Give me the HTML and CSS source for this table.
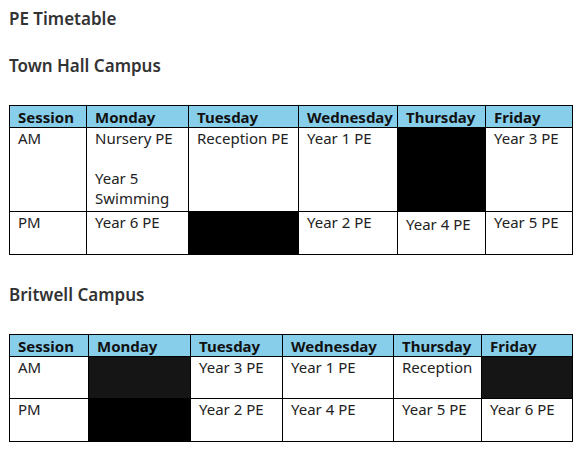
FILE: index.html
```html
<!DOCTYPE html>
<html lang="en">
<head>
<meta charset="utf-8">
<title>PE Timetable</title>
<link rel="stylesheet" href="styles.css">
</head>
<body>
<h1 class="title">PE Timetable</h1>
<h2 class="campus campus-first">Town Hall Campus</h2>
<table class="tt tt-town">
  <colgroup>
    <col class="c1"><col class="c2"><col class="c3"><col class="c4"><col class="c5"><col class="c6">
  </colgroup>
  <tr class="head">
    <th>Session</th><th>Monday</th><th>Tuesday</th><th>Wednesday</th><th>Thursday</th><th>Friday</th>
  </tr>
  <tr class="row-tall">
    <td>AM</td>
    <td>Nursery PE<br><br>Year 5<br>Swimming</td>
    <td>Reception PE</td>
    <td>Year 1 PE</td>
    <td class="off"></td>
    <td>Year 3 PE</td>
  </tr>
  <tr class="row">
    <td>PM</td>
    <td>Year 6 PE</td>
    <td class="off"></td>
    <td>Year 2 PE</td>
    <td class="low">Year 4 PE</td>
    <td>Year 5 PE</td>
  </tr>
</table>

<h2 class="campus">Britwell Campus</h2>
<table class="tt tt-brit">
  <colgroup>
    <col class="c1"><col class="c2"><col class="c3"><col class="c4"><col class="c5"><col class="c6">
  </colgroup>
  <tr class="head">
    <th>Session</th><th>Monday</th><th>Tuesday</th><th>Wednesday</th><th>Thursday</th><th>Friday</th>
  </tr>
  <tr class="row row-short">
    <td>AM</td>
    <td class="off soft"></td>
    <td>Year 3 PE</td>
    <td>Year 1 PE</td>
    <td>Reception</td>
    <td class="off soft"></td>
  </tr>
  <tr class="row">
    <td>PM</td>
    <td class="off"></td>
    <td>Year 2 PE</td>
    <td>Year 4 PE</td>
    <td>Year 5 PE</td>
    <td>Year 6 PE</td>
  </tr>
</table>
</body>
</html>
```

FILE: styles.css
```css
html, body {
  margin: 0;
  padding: 0;
  background: #ffffff;
}

body {
  padding: 8px 9px 0 9px;
  font-family: "Noto Sans", "Open Sans", sans-serif;
  color: #222222;
}

.title,
.campus {
  margin: 0;
  font-size: 17px;
  font-weight: 600;
  line-height: 22px;
  color: #333333;
}

.campus {
  margin-top: 25px;
  margin-bottom: 28px;
}

.tt + .campus {
  margin-top: 29px;
}

.tt {
  border-collapse: collapse;
  table-layout: fixed;
  width: 563px;
  font-size: 15px;
  line-height: 20px;
}

.tt th,
.tt td {
  border: 1px solid #000000;
  padding: 0 4px 0 8px;
  vertical-align: top;
  text-align: left;
  white-space: nowrap;
  overflow: hidden;
}

.tt th {
  background: #87ceeb;
  font-weight: 700;
  color: #111111;
  padding-top: 1px;
}

.tt .head {
  height: 22px;
}

.tt .row-tall {
  height: 84px;
}

.tt .row {
  height: 43px;
}

.tt .row-short {
  height: 42px;
}

.tt td.off {
  background: #000000;
}

.tt td.off.soft {
  background: #151515;
}

.tt td.low {
  padding-top: 2px;
}

.tt-town .c1 { width: 77px; }
.tt-town .c2 { width: 102px; }
.tt-town .c3 { width: 110px; }
.tt-town .c4 { width: 99px; }
.tt-town .c5 { width: 88px; }
.tt-town .c6 { width: 87px; }

.tt-brit .c1 { width: 79px; }
.tt-brit .c2 { width: 102px; }
.tt-brit .c3 { width: 92px; }
.tt-brit .c4 { width: 111px; }
.tt-brit .c5 { width: 88px; }
.tt-brit .c6 { width: 91px; }
```
